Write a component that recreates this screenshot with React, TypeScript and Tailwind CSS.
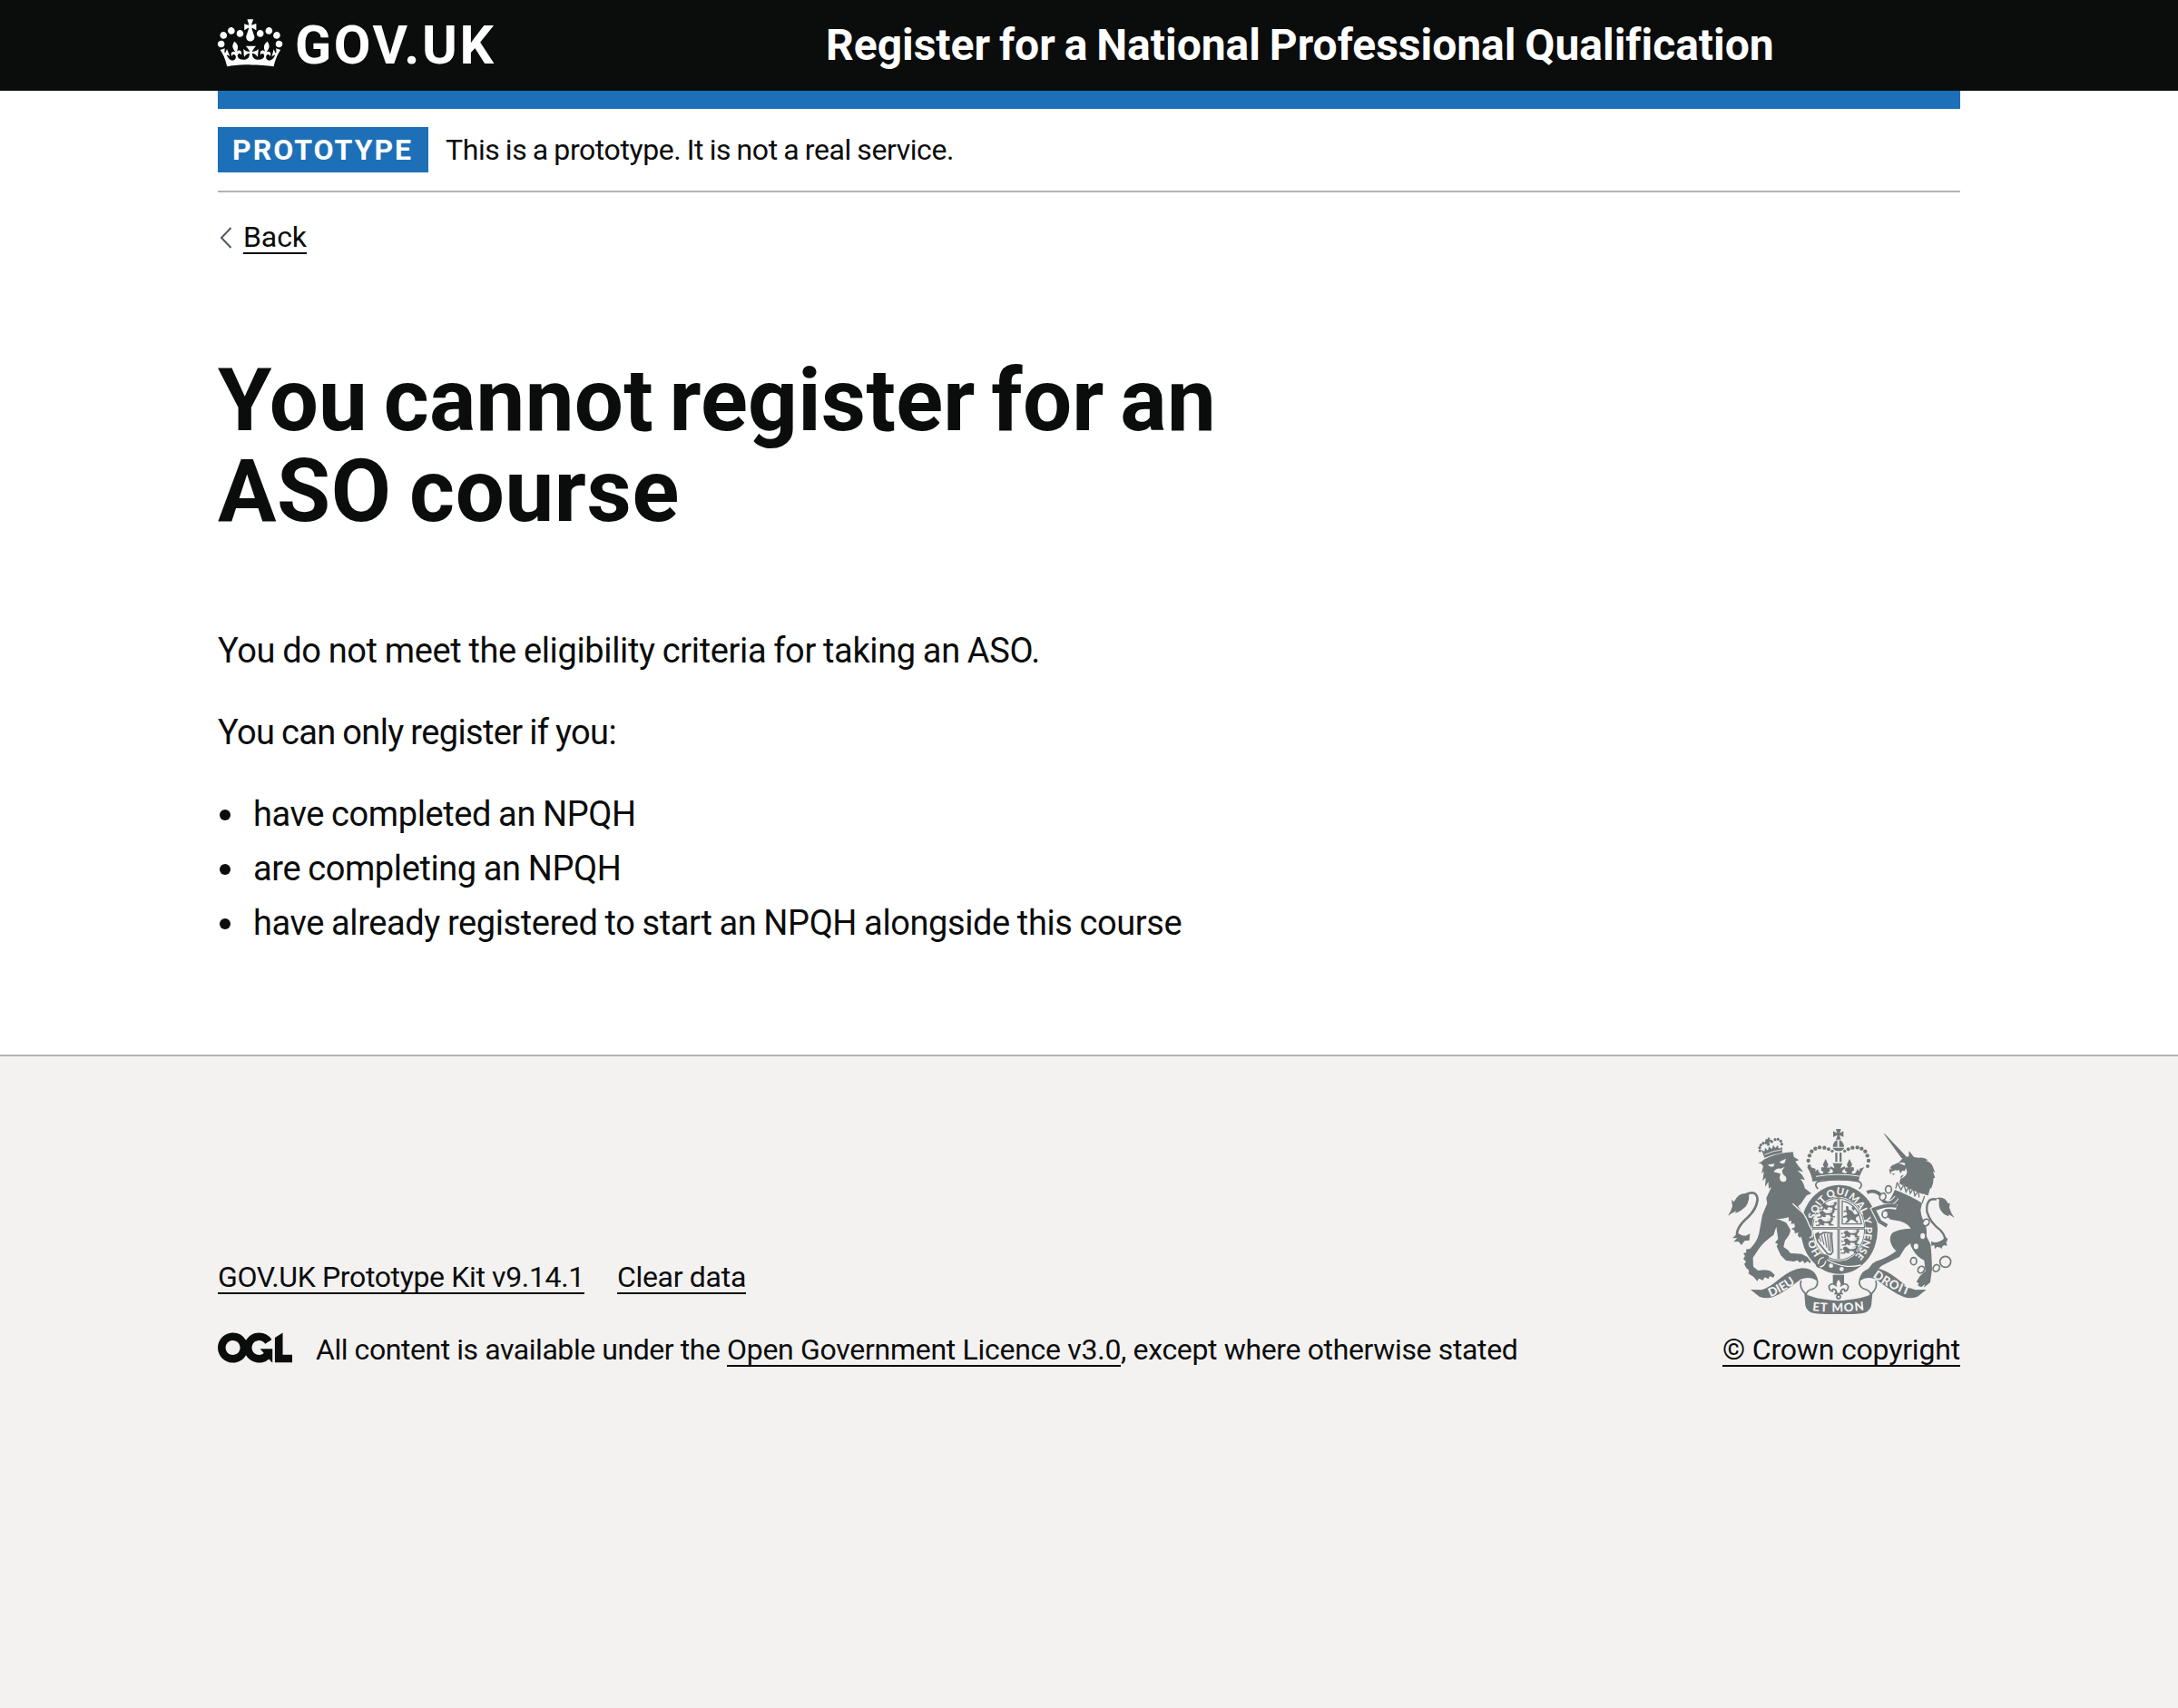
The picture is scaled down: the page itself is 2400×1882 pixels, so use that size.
import type { ReactNode } from "react";

const GREY = "#6f7779";
const PAPER = "#f3f2f1";

function Crown() {
  return (
    <svg viewBox="0 0 36 32" className="h-16 w-[72px] shrink-0" fill="currentColor" aria-hidden="true">
      <path d="M6.7 12.2c1 .4 2.1-.1 2.5-1s-.1-2.1-1-2.5c-1-.4-2.1.1-2.5 1-.4 1 0 2.1 1 2.5m-4.3 2.5c1 .4 2.1-.1 2.5-1s-.1-2.1-1-2.5c-1-.4-2.1.1-2.5 1-.5 1 0 2.1 1 2.5m-1.3 4.8c1 .4 2.1-.1 2.5-1 .4-1-.1-2.1-1-2.5-1-.4-2.1.1-2.5 1-.4 1 0 2.1 1 2.5m10.4-5.8c1 .4 2.1-.1 2.5-1s-.1-2.1-1-2.5c-1-.4-2.1.1-2.5 1s0 2.1 1 2.5m17.4-1.5c-1 .4-2.1-.1-2.5-1s.1-2.1 1-2.5c1-.4 2.1.1 2.5 1 .5 1 0 2.1-1 2.5m4.3 2.5c-1 .4-2.1-.1-2.5-1s.1-2.1 1-2.5c1-.4 2.1.1 2.5 1 .5 1 0 2.1-1 2.5m1.3 4.8c-1 .4-2.1-.1-2.5-1-.4-1 .1-2.1 1-2.5 1-.4 2.1.1 2.5 1 .4 1 0 2.1-1 2.5m-10.4-5.8c-1 .4-2.1-.1-2.5-1s.1-2.1 1-2.5c1-.4 2.1.1 2.5 1s0 2.1-1 2.5m-5.3-4.9 2.4 1.3V6.5l-2.4.8c-.1-.1-.1-.2-.2-.2s1-3 1-3h-3.4l1 3c-.1.1-.2.1-.2.2-.1.1-2.4-.7-2.4-.7v3.500L17 8.800c-.1.1 0 .2.1.3l-1.4 4.2c-.1.2-.1.4-.1.7 0 1.1.8 2.1 1.9 2.2h.8c1.1-.2 1.9-1.1 1.9-2.1 0-.2 0-.5-.1-.7l-1.4-4.2c.2-.1.3-.2.3-.3m-1 20.3c4.6 0 8.9.3 12.8.9 1.1-4.6 2.4-7.2 3.8-9.1l-2.6-.9c.3 1.3.3 1.9 0 2.8-.4-.4-.8-1.2-1.1-2.4l-1.2 4.2c.8-.5 1.4-.9 2-.9-1.2 2.6-2.7 3.2-3.6 3-1.2-.2-1.7-1.3-1.5-2.2.3-1.3 1.6-1.6 2.2-.1 1.2-2.4-.8-3.1-2.1-2.4 1.9-1.9 2.2-3.6.6-5.7-2.2 1.7-2.2 3.3-1.2 5.6-1.3-1.5-3.3-.7-2.5 1.7.9-1.4 2.1-.5 2 .8-.2 1.2-1.7 2.1-3.7 1.9-2.8-.2-2.9-2.2-2.9-3.5.7-.1 1.9.5 3 2l.4-4.4c-1.2 1.2-2.3 1.4-3.5 1.5.4-1.2 2.1-3.1 2.1-3.1h-5.5s1.8 2 2.1 3.1c-1.2 0-2.3-.3-3.5-1.5l.4 4.4c1.1-1.5 2.3-2.1 3-2-.1 1.3-.1 3.3-2.9 3.500-2 .2-3.500-.7-3.700-1.900-.2-1.300 1.100-2.200 2-.8.7-2.400-1.300-3.200-2.500-1.700 1-2.300 1-3.900-1.200-5.600-1.600 2.100-1.300 3.800.6 5.700-1.300-.7-3.300 0-2.100 2.400.6-1.500 1.900-1.100 2.200.1.2.9-.4 1.900-1.500 2.200-1 .2-2.400-.5-3.600-3 .7 0 1.300.4 2 .9L5 20.500c-.4 1.200-.8 2-1.100 2.400-.3-.9-.2-1.500 0-2.800l-2.600.9C2.700 22.900 4 25.500 5.100 30.100c4-.7 8.200-1 12.900-1" />
    </svg>
  );
}

function OglLogo() {
  return (
    <svg viewBox="0 0 483.2 195.7" className="h-[34px] w-[82px] shrink-0" fill="currentColor" aria-hidden="true">
      <path d="M421.5 142.8V.1l-50.7 32.3v161.1h112.4v-50.7zm-122.3-9.6A47.12 47.12 0 0 1 221 97.8c0-26 21.1-47.1 47.1-47.1 16.7 0 31.4 8.7 39.7 21.8l42.7-27.2A97.63 97.63 0 0 0 268.1 0c-36.5 0-68.3 20.1-85.1 49.7A98 98 0 0 0 97.8 0C43.9 0 0 43.9 0 97.8s43.9 97.8 97.8 97.8c36.5 0 68.3-20.1 85.1-49.7a97.76 97.76 0 0 0 149.6 25.4l19.4 22.2h3v-87.8h-80l24.3 27.5zM97.8 145c-26 0-47.1-21.1-47.1-47.1s21.1-47.1 47.1-47.1 47.1 21.1 47.1 47.1S123.800 145 97.800 145" />
    </svg>
  );
}

const LEFT_BEADS = [
  [311, 165, 6], [308, 147, 6.5], [312, 130, 6.5], [319, 116, 6.5], [331, 107, 6.5],
  [345, 103, 6.5], [361, 104, 6.5], [375, 109, 6], [387, 115, 5],
];

/* One passant lion of the royal arms. */
function SmallLion({ x, y }: { x: number; y: number }) {
  return (
    <path
      transform={`translate(${x} ${y})`}
      d="M2 20h9l3-7-6-5 3-6 9-2 4 5 8 4 12-1 8-4-3-5 7-3 3 4-3 7-5 6 3 6h6v3H46l-2-7-11-2-6 4 3 4h-9l-2-4-5 6H2zM0 8h5v3H0zM40 2l8-2"
      fill={GREY}
      stroke={GREY}
      strokeWidth="1"
    />
  );
}

/* Left half of the motto scroll; the right half is its mirror image. */
function ScrollSide() {
  return (
    <>
      <path d="M117 573l36 1q22-5 60-37 40-32 75-35 34 0 46 24 6 11 6 22-8-9-18-12-20-5-40 3-58 46-90 58-22 8-46-1z" />
      <path d="M284 543q-8 24 16 45M338 544q2 20-14 26-22 5-23 20" fill="none" stroke={GREY} strokeWidth="5" />
    </>
  );
}

function RoyalArms() {
  return (
    <svg viewBox="42 42 750 612" className="h-[204px] w-[250px]" fill={GREY} aria-hidden="true">
      <defs>
        <path id="garter" d="M410 490A97 116 0 0 1 410 260A97 116 0 0 1 410 490" />
        <path id="dieu" d="M182 597Q232 580 292 530" />
        <path id="etmon" d="M321 643Q408 652 505 639" />
        <path id="droit" d="M520 530Q575 572 660 600" />
      </defs>

      {/* crown above the shield */}
      <path d="M399 42h17q-2 10-5 13 8-2 13-6v20q-6-5-13-6 2 7 5 14h-17q4-8 5-14-7 1-14 6V49q6 4 14 6-4-5-5-13z" />
      <path d="M389 101a18 22 0 0 1 15-22v22zM410 79a18 22 0 0 1 16 22h-16zM388 104h39q-5 11-19 11t-20-11z" />
      {LEFT_BEADS.map(([x, y, r]) => (
        <g key={`${x}-${y}`}>
          <circle cx={x} cy={y} r={r} />
          <circle cx={815 - x} cy={y} r={r} />
        </g>
      ))}
      <path d="M397 120h7v31h-7zM411 120h7v31h-7z" />
      <path d="M316 168l16 6-1 9 8-8 5 11q7 6 13 2 2-8-7-9l1-10q7-2 10 2l-5-11 9-19 9 19-5 12q5-5 10-2l1 10-8 6q12 5 18-2-1-9-10-10v-9l14 7q-2-12-6-17h34q-5 5-7 17l14-7v9q-9 2-10 10 7 7 18 2l-8-6 1-10q5-3 10 2l-5-12 9-19 9 19-5 11q3-4 10-2l1 10q-9 1-7 9 6 4 13-2l5-11 8 8-1-9 16-6q-16 24-19 48-76-13-152 0-3-24-18-48z" />
      <path d="M333 199q75-13 150 0" fill="none" stroke={PAPER} strokeWidth="3" />
      <path d="M340 240q-12-10-5-20 5-6 14-6 59-9 118 0 9 0 14 6 7 10-5 20" fill="none" stroke={GREY} strokeWidth="5" />

      {/* lion crown */}
      <path d="M163 137l-10-26 10 5 2-12 9 9 4-13 9 9 5-14 7 10 8-10 3 12 11-5 1 19q-30 4-59 16z" />
      {[[148, 114], [147, 104], [151, 95], [159, 89], [168, 88], [187, 84], [198, 77], [208, 76], [217, 82], [220, 92]].map(([x, y]) => (
        <circle key={`${x}-${y}`} cx={x} cy={y} r="4.8" />
      ))}
      <path d="M167 75l8 1-2-6 9 2-3 5 9 1-2 6-7-1 1 14-8 1-1-13-6 1z" />
      <path d="M163 127q28-13 57-16" fill="none" stroke={PAPER} strokeWidth="2.5" />

      {/* lion */}
      <path d="M141 155q12-2 20-12 40-22 96-25l3 16 17 11-12 4 11 16 15 18-19-4 14 13 11 19-15-4q13 17 14 31l22 17-16 7-18 26-10 10q17 19 28 46l19 30 5 17-11 7-6-9-4 15-10-2-1-12-9 11-7-8 2-11-12 4-1-10-10-5 12-6-3-12-10 2 1-12-10 3-5-12q-22 8-43 4l14 4 22 10 14 24q-1 17-18 34l-5 22 14 10 9 11 18 1 19 1 20 11 11 12-3 9-8-8-11 7-5-9-11 7-6-8-14 4-25-3-17-17-14-31 5-6-10-5 10-13-6-40-9 27q-31 22-46 42l-22 33 1 30 16 13q27-6 42 2l13 12-4 9-13-4-4 9-12-6-6 10-14-6-5 9-11-13-18-12 2-10-10-10-6-12 6-7-9-10 6-9-6-9 10-3-1-10 13-2q23-22 30-51l11-61 16-38-3-18 17-36-9 5-1-22-11 16 2-30-10 10 4-31-8 7 6-24-8-9z" />
      <path d="M174 160l22-3-3 9q-12 4-19-6zM212 151l22-11-4 14q-10 6-18-3zM193 184q8-14 24-11l13-6-9 12 3 12 10 9q5 15-8 17-13 0-13-15l3-12z" fill={PAPER} />
      {/* lion tail */}
      <path d="M102 258q36-16 38 18-4 31-31 57-43 37-36 65l18 13" fill="none" stroke={GREY} strokeWidth="8" />
      <path d="M111 256q-33-7-49 27l-8-7 3 21q-4 16-15 32 12-9 29-16l-6 8q24-9 37-24 13-19 9-41zM75 386l-18 17 16-1-12 13 16-1 10 12 10-14 16-2 2-22-14 7-12-1z" />

      {/* unicorn horn and head */}
      <path d="M557 57l5 2 71 75-12 7-7-5z" />
      <path d="M571 180l13-17 24-11 13-15 19-4 1-19 16 21 16 2q19-3 30 8l-7 3q14 1 22 15l9 23-7-3 7 20-5 2-2 17-6 17-3-3-7 26-22-6-30-12-31-16q-12-4-12-7l5-24 10-4 10-12-16-1-5 9-6-12-10 4-6 13-13-5-3-13 10-2-8-3z" />
      <path d="M607 157q10-8 22 0l-3 6q-11-7-19-6zM580 184l19-7-4 11-12 3zM630 171q9 15-2 26-10 10-19 11 12-7 15-17 3-10 6-20z" fill={PAPER} />
      {/* collar */}
      <path d="M604 217l13 17 7-11 7 17 9-10 6 18 9-9 6 18 10-10 3 16 18-7-8 27-41-22-43-19z" fill={PAPER} />
      <path d="M602 218l-5 21M603 221l11 22 10-17 7 24 9-18 5 23 10-17 5 25 12-17 2 22M692 264l-8 23" fill="none" stroke={GREY} strokeWidth="4" />
      {/* unicorn body */}
      <path d="M594 243q50 19 90 44l-5 22q2 24 11 38 12 22 8 49l14 27 3 35 2 46-6 45-21 17 3-11-11 10-12-5 3-9-8-3 12-20 18-16-4-36q-24-11-38-36-7-9-8-20l-17 14-19 31q-33 16-59 29l-9 9-22 5-15-1 16-20 12-8q35-9 67-34-14-10-20-32-3-18 8-28 15-12 60-14-10-16-34-24l-33-6q-15-8-20-30l10-22q3-10 13-23z" />
      {/* unicorn tail */}
      <path d="M732 275q-36-8-32 40 10 36 44 61 23 25 13 45-14 14-26 5" fill="none" stroke={GREY} strokeWidth="7" />
      <path d="M729 271q28-9 41 17l6-1-2 15q6 20 17 34-10-8-20-12l2 7q-18-4-28-21-8-15-4-35zM762 400l7 5-5 13 3 10-14-3-5 14-10-13-12 13-2-14-9 4-1-16q21 12 48-13z" />

      {/* garter */}
      <ellipse cx="410" cy="375" rx="131" ry="151" fill={PAPER} />
      <ellipse cx="410" cy="374" rx="127" ry="147" />
      <ellipse cx="408" cy="373" rx="89" ry="106" fill={PAPER} />
      <ellipse cx="408" cy="373" rx="86" ry="102" fill="none" stroke={GREY} strokeWidth="3" />
      <g fill={PAPER} className="font-['Lato'] text-[34px] font-black">
        <text><textPath href="#garter" startOffset="11.3%">HO</textPath></text>
        <text><textPath href="#garter" startOffset="30.3%">SOIT</textPath></text>
        <text><textPath href="#garter" startOffset="43.8%">QUI</textPath></text>
        <text><textPath href="#garter" startOffset="55%">MAL</textPath></text>
        <text><textPath href="#garter" startOffset="68.6%">Y</textPath></text>
        <text><textPath href="#garter" startOffset="73.4%">PENSE</textPath></text>
      </g>
      {/* garter buckle and strap */}
      <path d="M334 496q-10-26 14-38 14-6 28 4l-2 16q50 26 108 15-24 24-69 27-35-3-55-22-12 10-24-2z" />
      <path d="M341 488q0-18 18-22M346 498q16-2 20-20M370 474q56 32 112 18" fill="none" stroke={PAPER} strokeWidth="4" />
      <circle cx="383" cy="494" r="7" fill={PAPER} />
      <circle cx="418" cy="505" r="7" fill={PAPER} />

      {/* lion forearm over the garter */}
      <path d="M256 289l34 30q13 22 20 42l10 18-1 16-8 6-6-9-5 14-9-1-2-12-9 9-7-8 2-11-12 4-1-10-10-5 12-6-3-12-10 2 1-12-10 3z" />
      <path d="M256 289l35 31q14 22 21 42l10 18-1 16-9 7" fill="none" stroke={PAPER} strokeWidth="4" />

      {/* unicorn forelegs over the garter */}
      <path d="M600 268q-22 30-44 12-6-22-20-28-18-8-34 0" fill="none" stroke={PAPER} strokeWidth="17" />
      <path d="M600 268q-22 30-44 12-6-22-20-28-18-8-34 0" fill="none" stroke={GREY} strokeWidth="11" />
      <path d="M600 300q-35-10-76 8l20 40 22 12" fill="none" stroke={PAPER} strokeWidth="19" />
      <path d="M600 296q-35-6-76 12l20 40 24 14" fill="none" stroke={GREY} strokeWidth="12" />
      {/* chain */}
      {[[573, 242, 0], [554, 266, 20], [562, 324, 0], [697, 351, 40], [686, 396, 0], [664, 430, 0], [656, 479, 0], [681, 507, 40], [731, 502, 40]].map(([x, y, a]) => (
        <ellipse key={`${x}-${y}`} cx={x} cy={y} rx="10" ry="12" fill={PAPER} stroke={GREY} strokeWidth="5" transform={`rotate(${a} ${x} ${y})`} />
      ))}
      <circle cx="761" cy="481" r="18" fill="none" stroke={GREY} strokeWidth="5" />

      {/* shield quarters */}
      <path d="M404 268h8v98h83v8h-83v98h-8v-98h-83v-8h83z" />
      <path d="M408 268v205M321 370h174" stroke={PAPER} strokeWidth="1.5" />
      <SmallLion x={343} y={287} />
      <SmallLion x={336} y={312} />
      <SmallLion x={331} y={339} />
      <SmallLion x={417} y={378} />
      <SmallLion x={417} y={404} />
      <SmallLion x={414} y={431} />
      <path d="M420 280q52 10 64 76h-64z" fill="none" stroke={GREY} strokeWidth="4" />
      <path d="M432 297l8 1 2 10 10 4 9 13 10-2 4-12 2 16-11 7-1 9 9 6-5 4-11-9-10-3-8 10-12 2 10-11-4-8-10 2-1-5 13-5-2-10-9 1v-5l8-1zM454 297l8 9-5 7-6-9z" />
      <path d="M333 392q16 0 27-8l26 2-1 12 4 50-7 9-10-2-33-40z" fill="none" stroke={GREY} strokeWidth="5" />
      <path d="M342 393l8 22M351 391l9 34M361 388l8 46M371 388l5 56M380 388l1 60" stroke={GREY} strokeWidth="3.5" />
      <path d="M331 388l11-6 5 11-7 16-8-8z" />

      {/* scroll */}
      <ScrollSide />
      <g transform="translate(815 0) scale(-1 1)">
        <ScrollSide />
      </g>
      <path d="M295 586q32 19 112 24 82-5 113-24l-4 40q-6 22-34 26-75 6-150 0-28-4-34-26z" />
      <g fill={PAPER} className="font-['Lato'] text-[40px] font-black">
        <text><textPath href="#dieu">DIEU</textPath></text>
        <text><textPath href="#etmon" textLength="172">ET MON</textPath></text>
        <text><textPath href="#droit" textLength="134">DROIT</textPath></text>
      </g>

      {/* fleur-de-lis */}
      <path d="M389 524h37v39h-37z" />
      <path d="M408 535q-12 14-9 24-16-11-23 3 1 16 12 16-1-10 9-5l4 7-4 6h22l-4-6 4-7q10-5 9 5 11 0 12-16-7-14-23-3 3-10-9-24z" fill={PAPER} stroke={GREY} strokeWidth="5" />
      <path d="M402 588h12l-3 10h-6z" />
      <circle cx="408" cy="597" r="6" fill={PAPER} stroke={GREY} strokeWidth="5" />
    </svg>
  );
}

function Link({ children, className = "" }: { children: ReactNode; className?: string }) {
  return (
    <a href="#" className={`inline-block border-b-2 border-[#0b0c0c] leading-[34px] whitespace-pre ${className}`}>
      {children}
    </a>
  );
}

function Header() {
  return (
    <header className="bg-[#0b0c0c] text-white">
      <div className="mx-auto flex h-[100px] w-[1920px] items-center">
        <a href="#" className="flex w-[670px] items-center">
          <span className="-mt-[10px]">
            <Crown />
          </span>
          <span className="ml-[13px] text-[59px] leading-[60px] font-bold tracking-[2.6px]">GOV.UK</span>
        </a>
        <a href="#" className="text-5xl leading-[60px] font-bold tracking-[-0.02px] whitespace-nowrap [word-spacing:-2px]">
          Register for a National Professional Qualification
        </a>
      </div>
    </header>
  );
}

const CRITERIA = [
  "have completed an NPQH",
  "are completing an NPQH",
  "have already registered to start an NPQH alongside this course",
];

export default function App() {
  return (
    <div className="flex min-h-[1882px] flex-col bg-white font-['Roboto',sans-serif] text-[32px] text-[#0b0c0c]">
      <Header />
      <div className="mx-auto w-[1920px]">
        <div className="h-5 bg-[#1d70b8]" />
        <div className="flex items-center border-b-2 border-[#b1b4b6] py-5">
          <strong className="flex h-[50px] w-[232px] items-center bg-[#1d70b8] pl-4 font-bold tracking-[2px] text-white">
            PROTOTYPE
          </strong>
          <span className="ml-[19px] tracking-[-0.42px] [word-spacing:-1px]">This is a prototype. It is not a real service.</span>
        </div>
        <div className="mt-8 flex">
          <svg viewBox="0 0 14 24" className="mt-[6px] ml-[2px] h-6 w-[14px]" fill="none" stroke="#505a5f" strokeWidth="2" aria-hidden="true">
            <path d="M12.5 1 2 12l10.5 11" />
          </svg>
          <Link className="ml-3 tracking-[-0.1px]">Back</Link>
        </div>
        <main className="pt-[111px]">
          <h1 className="text-8xl leading-[100px] font-bold">
            <span className="block tracking-[0.25px] [word-spacing:-6.5px]">You cannot register for an</span>
            <span className="block tracking-[0.6px] [word-spacing:-5px]">ASO course</span>
          </h1>
          <div className="mt-[101px] text-[38px] leading-[50px] [word-spacing:-1px]">
            <p className="tracking-[-0.36px]">You do not meet the eligibility criteria for taking an ASO.</p>
            <p className="mt-10 tracking-[-0.66px]">You can only register if you:</p>
            <ul className="mt-10 space-y-[10px] tracking-[-0.4px]">
              {CRITERIA.map((item) => (
                <li key={item} className="flex items-center">
                  <span className="mt-[2px] mr-[25px] ml-[2px] size-[12px] rounded-full bg-[#0b0c0c]" />
                  {item}
                </li>
              ))}
            </ul>
          </div>
        </main>
      </div>
      <footer className="mt-[120px] flex-1 border-t-2 border-[#b1b4b6] bg-[#f3f2f1]">
        <div className="mx-auto flex w-[1920px] justify-between pt-20">
          <div className="flex flex-col pt-[146px]">
            <div className="flex gap-9">
              <Link className="tracking-[-0.36px]">GOV.UK Prototype Kit v9.14.1</Link>
              <Link className="tracking-[-0.3px]">Clear data</Link>
            </div>
            <div className="mt-[42px] flex">
              <OglLogo />
              <div className="ml-[26px] flex leading-[34px] whitespace-pre">
                <span className="pt-[2px] tracking-[-0.44px]">All content is available under the </span>
                <Link className="mt-[2px] tracking-[-0.29px]">Open Government Licence v3.0</Link>
                <span className="pt-[2px] tracking-[-0.36px]">, except where otherwise stated</span>
              </div>
            </div>
          </div>
          <div className="flex w-[262px] flex-col items-center">
            <RoyalArms />
            <Link className="mt-[22px] tracking-[-0.18px]">© Crown copyright</Link>
          </div>
        </div>
      </footer>
    </div>
  );
}
